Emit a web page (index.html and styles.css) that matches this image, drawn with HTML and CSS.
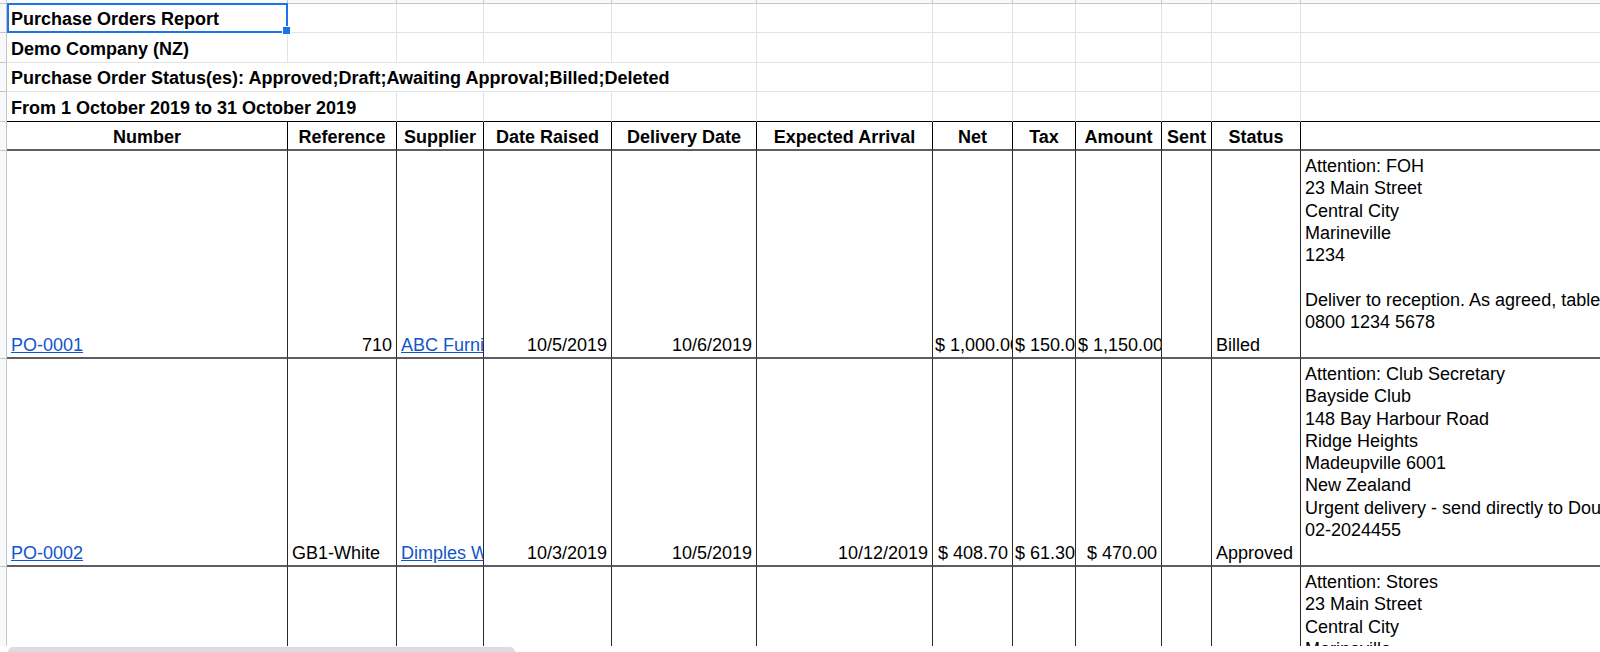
FILE: index.html
```html
<!DOCTYPE html>
<html lang="en">
<head>
<meta charset="utf-8">
<title>Purchase Orders Report</title>
<link rel="stylesheet" href="styles.css">
</head>
<body>
<div class="sheet">
  <!-- column header strip (cut off) -->
  <div class="g"></div><div class="t"></div><div class="t"></div><div class="t"></div><div class="t"></div><div class="t"></div><div class="t"></div><div class="t"></div><div class="t"></div><div class="t"></div><div class="t"></div><div class="t"></div><div class="t last"></div>

  <!-- row 1 -->
  <div class="g"></div>
  <div class="c b">Purchase Orders Report</div>
  <div class="c"></div><div class="c"></div><div class="c"></div><div class="c"></div><div class="c"></div><div class="c"></div><div class="c"></div><div class="c"></div><div class="c"></div><div class="c"></div><div class="c last"></div>

  <!-- row 2 -->
  <div class="g"></div>
  <div class="c b">Demo Company (NZ)</div>
  <div class="c"></div><div class="c"></div><div class="c"></div><div class="c"></div><div class="c"></div><div class="c"></div><div class="c"></div><div class="c"></div><div class="c"></div><div class="c"></div><div class="c last"></div>

  <!-- row 3 -->
  <div class="g"></div>
  <div class="c b span5">Purchase Order Status(es): Approved;Draft;Awaiting Approval;Billed;Deleted</div>
  <div class="c"></div><div class="c"></div><div class="c"></div><div class="c"></div><div class="c"></div><div class="c"></div><div class="c last"></div>

  <!-- row 4 -->
  <div class="g"></div>
  <div class="c rb b span2">From 1 October 2019 to 31 October 2019</div>
  <div class="c rb"></div><div class="c rb"></div><div class="c rb"></div><div class="c rb"></div><div class="c rb"></div><div class="c rb"></div><div class="c rb"></div><div class="c rb"></div><div class="c rb"></div><div class="c rb last"></div>

  <!-- header row -->
  <div class="g"></div>
  <div class="h">Number</div>
  <div class="h">Reference</div>
  <div class="h">Supplier</div>
  <div class="h">Date Raised</div>
  <div class="h">Delivery Date</div>
  <div class="h">Expected Arrival</div>
  <div class="h">Net</div>
  <div class="h">Tax</div>
  <div class="h">Amount</div>
  <div class="h">Sent</div>
  <div class="h">Status</div>
  <div class="h last"></div>

  <!-- data row 1 -->
  <div class="g"></div>
  <div class="d"><a class="lnk" href="#">PO-0001</a></div>
  <div class="d r">710</div>
  <div class="d"><a class="lnk" href="#">ABC Furniture</a></div>
  <div class="d r">10/5/2019</div>
  <div class="d r">10/6/2019</div>
  <div class="d r"></div>
  <div class="d r m">$ 1,000.00</div>
  <div class="d r m">$ 150.00</div>
  <div class="d r m">$ 1,150.00</div>
  <div class="d"></div>
  <div class="d">Billed</div>
  <div class="d top last">Attention: FOH<br>23 Main Street<br>Central City<br>Marineville<br>1234<br><br>Deliver to reception. As agreed, tables<br>0800 1234 5678</div>

  <!-- data row 2 -->
  <div class="g"></div>
  <div class="d"><a class="lnk" href="#">PO-0002</a></div>
  <div class="d">GB1-White</div>
  <div class="d"><a class="lnk" href="#">Dimples Warehouse</a></div>
  <div class="d r">10/3/2019</div>
  <div class="d r">10/5/2019</div>
  <div class="d r">10/12/2019</div>
  <div class="d r m">$ 408.70</div>
  <div class="d r m">$ 61.30</div>
  <div class="d r m">$ 470.00</div>
  <div class="d"></div>
  <div class="d">Approved</div>
  <div class="d top last">Attention: Club Secretary<br>Bayside Club<br>148 Bay Harbour Road<br>Ridge Heights<br>Madeupville 6001<br>New Zealand<br>Urgent delivery - send directly to Douglas<br>02-2024455</div>

  <!-- data row 3 (partially visible) -->
  <div class="g"></div>
  <div class="d"></div><div class="d"></div><div class="d"></div><div class="d"></div><div class="d"></div><div class="d"></div><div class="d"></div><div class="d"></div><div class="d"></div><div class="d"></div><div class="d"></div>
  <div class="d top last">Attention: Stores<br>23 Main Street<br>Central City<br>Marineville</div>

  <!-- active cell selection -->
  <div class="selection"></div>
  <div class="handle"></div>
</div>
<div class="hscroll"><div class="thumb"></div></div>
</body>
</html>
```

FILE: styles.css
```css
* { box-sizing: border-box; }

html, body {
  margin: 0;
  padding: 0;
  background: #ffffff;
  overflow: hidden;
}

body {
  width: 1600px;
  height: 652px;
  font-family: "Liberation Sans", Arial, sans-serif;
  font-size: 18px;
  line-height: 22.3px;
  color: #000000;
}

.sheet {
  position: relative;
  height: 646px;
  overflow: hidden;
  display: grid;
  grid-template-columns: 7px 281px 109px 87px 128px 145px 176px 80px 63px 86px 50px 89px 1fr;
  grid-template-rows: 4px 29px 30px 29px 30px 29px 208px 208px 208px;
}

/* row number gutter */
.g {
  background: #f8f9fa;
  border-right: 1px solid #c4c7c5;
  border-bottom: 1px solid #c4c7c5;
}

/* column header strip */
.t {
  background: #f8f9fa;
  border-right: 1px solid #c4c7c5;
  border-bottom: 1px solid #c4c7c5;
}

/* plain grid cells */
.c, .h, .d {
  display: flex;
  flex-direction: column;
  justify-content: flex-end;
  overflow: hidden;
  white-space: nowrap;
  padding: 0 4px 2px 4px;
}

.c {
  border-right: 1px solid #e2e3e3;
  border-bottom: 1px solid #e2e3e3;
}

.c.rb { border-bottom-color: #000000; }

.b { font-weight: bold; }

.span5 { grid-column: span 5; }
.span2 { grid-column: span 2; }

/* table header */
.h {
  font-weight: bold;
  text-align: center;
  border-right: 1px solid #000000;
  border-bottom: 2px solid #5e5e5e;
  padding-bottom: 1px;
}

/* data cells */
.d {
  border-right: 1px solid #2b2b2b;
  border-bottom: 2px solid #5e5e5e;
  padding-bottom: 1px;
}

.r { text-align: right; }
.m { padding-left: 2px; }

.d.top {
  justify-content: flex-start;
  padding-top: 4px;
}

.last { border-right: none; }

.lnk {
  color: #1155cc;
  text-decoration: underline;
}

/* active cell */
.selection {
  position: absolute;
  left: 7px;
  top: 3px;
  width: 281px;
  height: 30px;
  border: 2px solid #1a73e8;
  pointer-events: none;
}

.handle {
  position: absolute;
  left: 282px;
  top: 26px;
  width: 9px;
  height: 9px;
  background: #1a73e8;
  border: 1px solid #ffffff;
}

/* horizontal scrollbar */
.hscroll {
  height: 6px;
  overflow: hidden;
  padding-left: 8px;
  padding-top: 1px;
}

.thumb {
  width: 507px;
  height: 10px;
  background: #dadce0;
  border-radius: 5px;
}
```
